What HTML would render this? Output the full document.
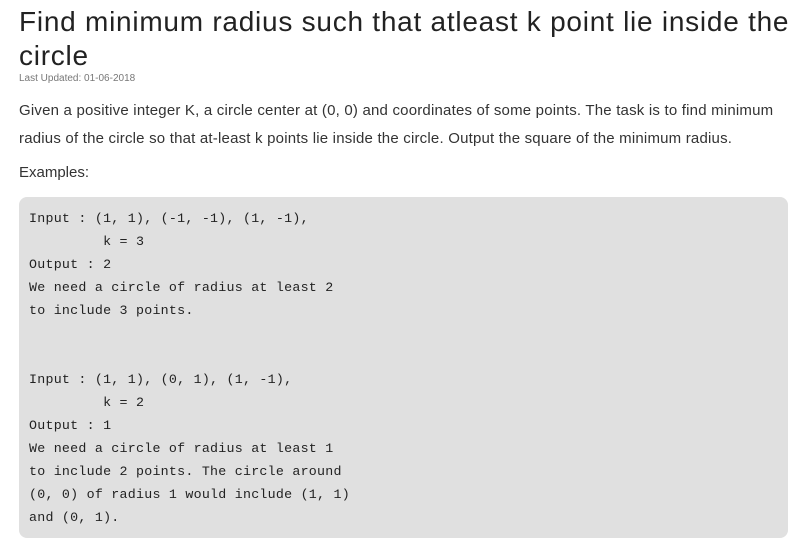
<!DOCTYPE html>
<html><head><meta charset="utf-8"><style>
body{margin:0;background:#fff;width:808px;height:554px;overflow:hidden;font-family:"Liberation Sans",sans-serif;}
h1{position:absolute;left:19px;top:5px;margin:0;font-weight:normal;font-size:28px;line-height:34px;color:#222;letter-spacing:0.75px;width:785px}
.upd{position:absolute;left:19px;top:73px;font-size:10px;color:#777}
.p{position:absolute;left:19px;top:97px;font-size:15px;line-height:28px;color:#333;width:770px;letter-spacing:0.2px}
.ex{position:absolute;left:19px;top:164px;font-size:15px;color:#333}
pre{position:absolute;left:19px;top:197px;width:769px;height:341px;margin:0;background:#e0e0e0;border-radius:8px;box-sizing:border-box;padding:10px 10px;font-family:"Liberation Mono",monospace;font-size:13.3px;letter-spacing:0.25px;line-height:23px;color:#222}
</style></head><body>
<h1>Find minimum radius such that atleast k point lie inside the circle</h1>
<div class="upd">Last Updated: 01-06-2018</div>
<div class="p">Given a positive integer K, a circle center at (0, 0) and coordinates of some points. The task is to find minimum radius of the circle so that at-least k points lie inside the circle. Output the square of the minimum radius.</div>
<div class="ex">Examples:</div>
<pre>Input : (1, 1), (-1, -1), (1, -1), 
         k = 3
Output : 2
We need a circle of radius at least 2
to include 3 points.


Input : (1, 1), (0, 1), (1, -1), 
         k = 2
Output : 1
We need a circle of radius at least 1
to include 2 points. The circle around
(0, 0) of radius 1 would include (1, 1)
and (0, 1).</pre>
</body></html>
